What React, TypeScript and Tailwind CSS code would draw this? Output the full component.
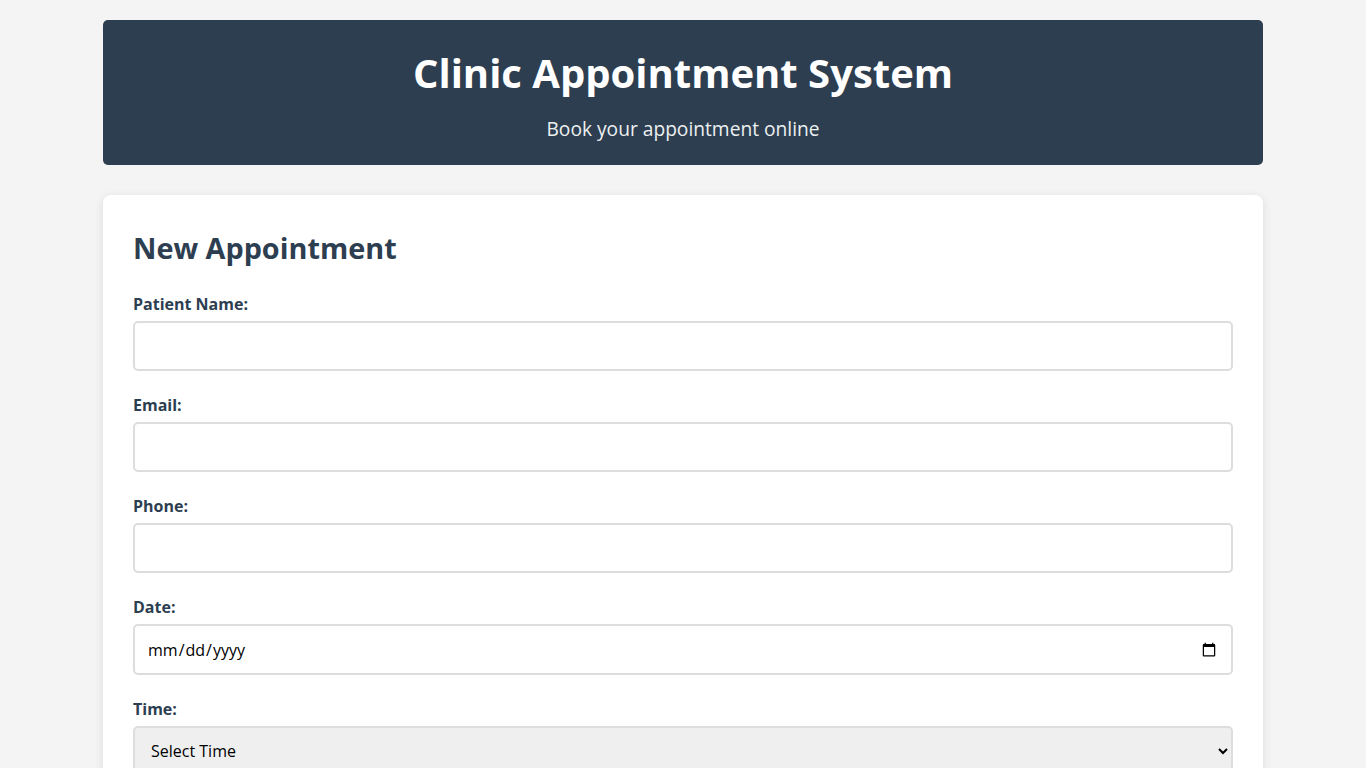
import { useState } from 'react'

const times = ['09:00 AM', '10:00 AM', '11:00 AM', '12:00 PM', '02:00 PM', '03:00 PM', '04:00 PM']

function Field({ label, children }: { label: string; children: React.ReactNode }) {
  return (
    <div className="mb-[22px]">
      <label className="mb-[5px] block text-[16px] font-bold leading-[24px] text-[#2c3e50]">{label}</label>
      {children}
    </div>
  )
}

const inputCls =
  'block h-[50px] w-full rounded-[5px] border-2 border-[#dddddd] bg-white px-3 text-[16px] text-black outline-none'

export default function App() {
  const [form, setForm] = useState({ name: '', email: '', phone: '', date: '', time: '' })
  const set = (k: keyof typeof form) => (e: { target: { value: string } }) =>
    setForm({ ...form, [k]: e.target.value })

  return (
    <div className="min-h-screen bg-[#f4f4f4] font-['Open_Sans',sans-serif]">
      <div className="mx-auto max-w-[1200px] px-5 pt-5">
        <header className="mb-[30px] rounded-[5px] bg-[#2c3e50] pt-[26px] pb-[23px] text-center text-white">
          <h1 className="text-[40px] font-bold leading-[54px]">Clinic Appointment System</h1>
          <p className="mt-4 text-[19.2px] leading-[26px] text-[#ecf0f1]">Book your appointment online</p>
        </header>

        <section className="rounded-lg bg-white p-[30px] shadow-[0_2px_10px_rgba(0,0,0,0.1)]">
          <h2 className="mt-1 mb-[25px] text-[28.8px] font-bold leading-[38px] text-[#2c3e50]">New Appointment</h2>
          <form onSubmit={(e) => e.preventDefault()}>
            <Field label="Patient Name:">
              <input type="text" className={inputCls} value={form.name} onChange={set('name')} />
            </Field>
            <Field label="Email:">
              <input type="email" className={inputCls} value={form.email} onChange={set('email')} />
            </Field>
            <Field label="Phone:">
              <input type="tel" className={inputCls} value={form.phone} onChange={set('phone')} />
            </Field>
            <Field label="Date:">
              <input
                type="date"
                className="block h-[51px] w-full rounded-[5px] border-2 border-[#dddddd] bg-white px-3 text-[16px] text-black outline-none"
                value={form.date}
                onChange={set('date')}
              />
            </Field>
            <Field label="Time:">
              <select
                className="block h-[50px] w-full appearance-auto rounded-[5px] border-2 border-[#dddddd] bg-[#efefef] px-3 text-[16px] text-black outline-none"
                value={form.time}
                onChange={set('time')}
              >
                <option value="">Select Time</option>
                {times.map((t) => (
                  <option key={t} value={t}>
                    {t}
                  </option>
                ))}
              </select>
            </Field>
          </form>
        </section>
      </div>
    </div>
  )
}
